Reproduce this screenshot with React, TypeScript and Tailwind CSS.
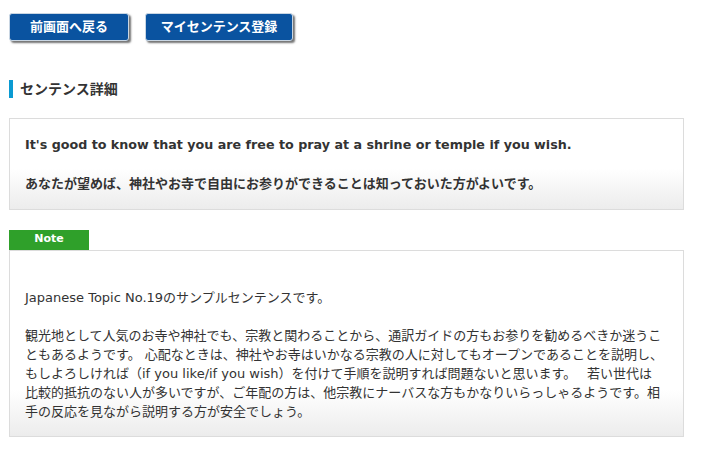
import React from "react";

const font = {
  fontFamily: '"DejaVu Sans", "Noto Sans CJK JP", sans-serif',
};

function BlueButton({ label, width }: { label: string; width: string }) {
  return (
    <button
      className={`${width} h-[28px] rounded-[3px] border border-[#c9d6e3] bg-[#0a53a0] text-[13px] font-bold text-white shadow-[2px_2px_2px_rgba(0,0,0,0.55)]`}
    >
      {label}
    </button>
  );
}

const noteLines = [
  "観光地として人気のお寺や神社でも、宗教と関わることから、通訳ガイドの方もお参りを勧めるべきか迷うこ",
  "ともあるようです。 心配なときは、神社やお寺はいかなる宗教の人に対してもオープンであることを説明し、",
  "もしよろしければ（if you like/if you wish）を付けて手順を説明すれば問題ないと思います。　 若い世代は",
  "比較的抵抗のない人が多いですが、ご年配の方は、他宗教にナーバスな方もかなりいらっしゃるようです。相",
  "手の反応を見ながら説明する方が安全でしょう。",
];

export default function App() {
  return (
    <div className="min-h-[455px] bg-white pl-[9px] pr-[31px] pt-[13px] text-[#333]" style={font}>
      {/* Buttons */}
      <div className="flex gap-[16px]">
        <BlueButton label="前画面へ戻る" width="w-[120px]" />
        <BlueButton label="マイセンテンス登録" width="w-[148px]" />
      </div>

      {/* Section heading */}
      <div className="mt-[39px] flex h-[18px] items-center">
        <div className="h-[18px] w-[4px] bg-[#0a9ad2]" />
        <h2 className="ml-[7px] text-[14px] font-bold leading-[18px] text-[#333]">
          センテンス詳細
        </h2>
      </div>

      {/* Sentence box */}
      <div className="mt-[20px] border border-[#dcdcdc] bg-[linear-gradient(to_bottom,#ffffff_55%,#ececec_100%)] px-[15px] pt-[16px] pb-[15px]">
        <p className="text-[12.7px] font-bold leading-[19.5px]">
          It's good to know that you are free to pray at a shrine or temple if you wish.
        </p>
        <p className="mt-[19.5px] text-[13px] font-bold leading-[19.5px]">
          あなたが望めば、神社やお寺で自由にお参りができることは知っておいた方がよいです。
        </p>
      </div>

      {/* Note */}
      <div className="mt-[20px]">
        <div className="flex h-[20px] w-[80px] items-center justify-center bg-[#2fa02a] text-[11px] font-bold text-white">
          Note
        </div>
        <div className="border border-[#dcdcdc] bg-[linear-gradient(to_bottom,#ffffff_75%,#ececec_100%)] px-[15px] pt-[18px] pb-[15px] text-[13px] leading-[19px]">
          <p>&nbsp;</p>
          <p>Japanese Topic No.19のサンプルセンテンスです。</p>
          <p>&nbsp;</p>
          {noteLines.map((line) => (
            <p key={line} className="whitespace-nowrap">
              {line}
            </p>
          ))}
        </div>
      </div>
    </div>
  );
}
